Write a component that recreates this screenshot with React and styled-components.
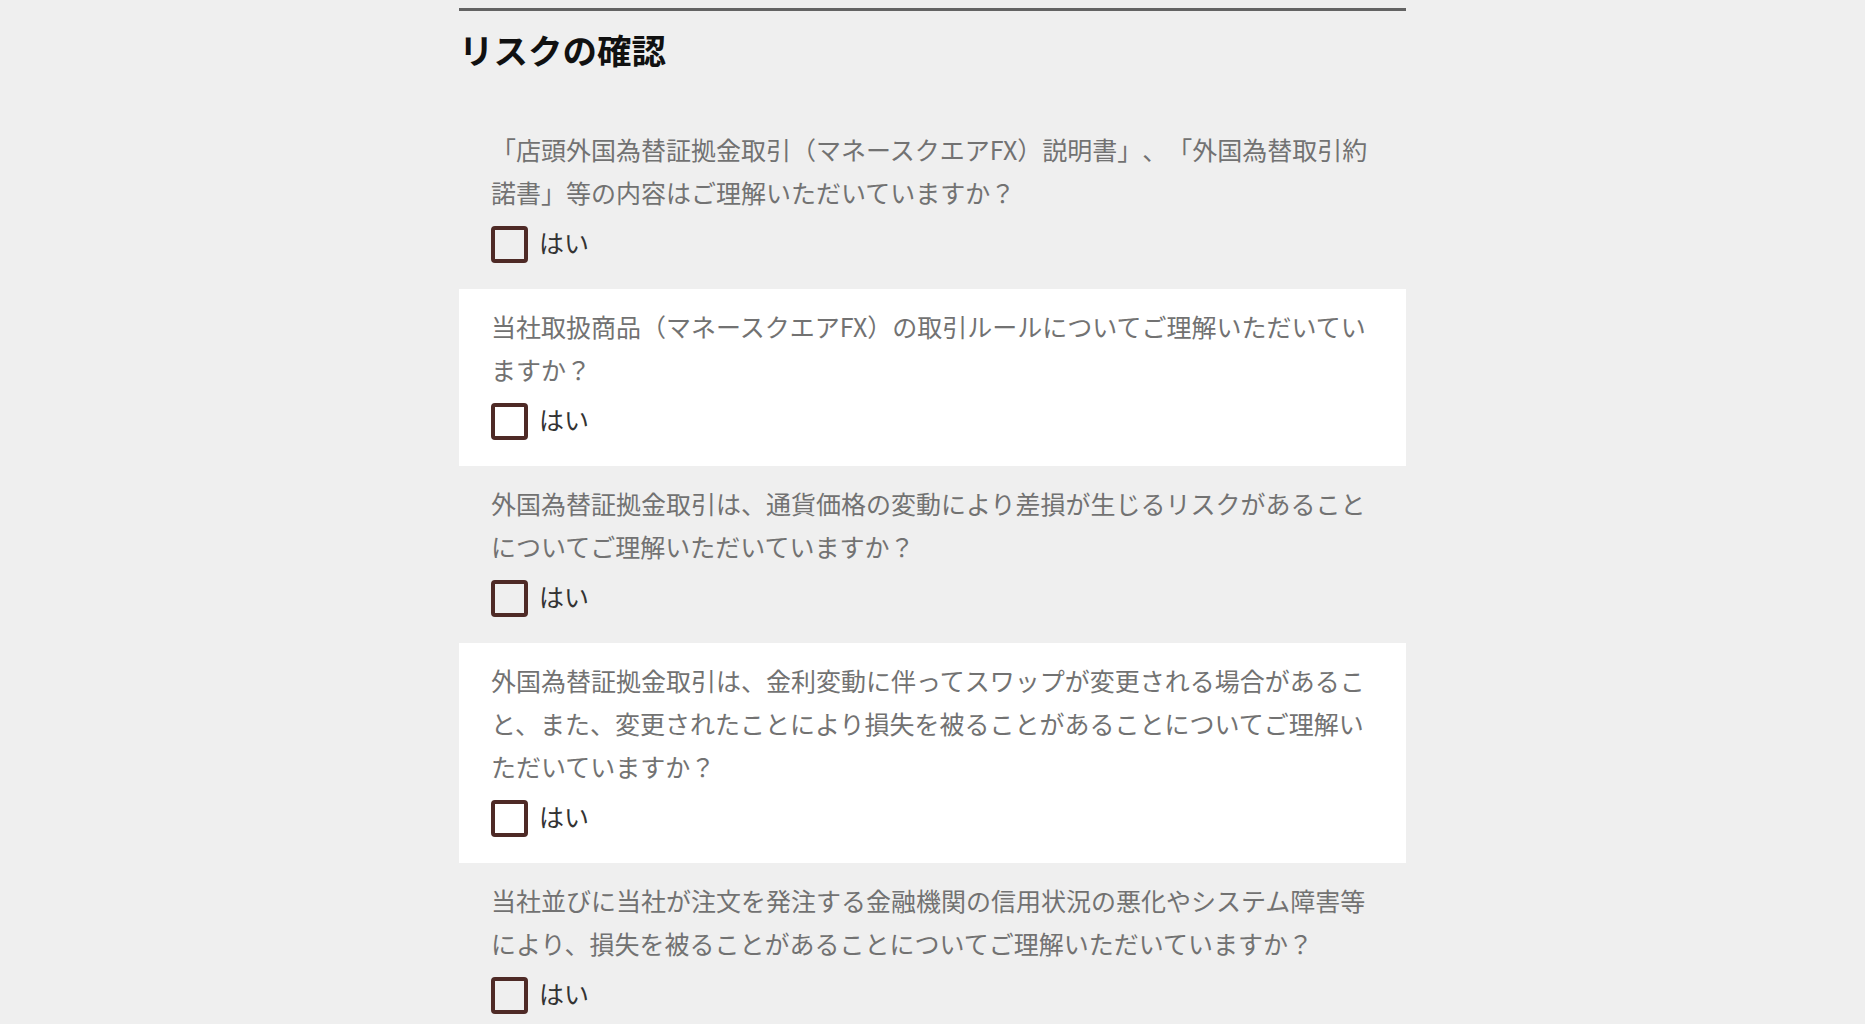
import { useState } from "react";
import styled, { createGlobalStyle } from 'styled-components'

const GlobalStyle = createGlobalStyle`
body {
  margin: 0;
  background-color: #efefef;
  font-family: "Noto Sans CJK JP", "Noto Sans", sans-serif;
}
`

const Section = styled.section`
width: 947px;
margin: 8px auto 0;
border-top: 3px solid #636363;
`

const Title = styled.h2`
margin: 0;
padding: 14px 0 38px;
font-size: 34.5px;
line-height: 49px;
font-weight: 700;
color: #111;
`

const Item = styled.div`
padding: 16px 32px 26px;
background-color: ${(props) => (props.$white ? '#ffffff' : 'transparent')};
`

const Question = styled.p`
margin: 0;
font-size: 25px;
line-height: 43px;
color: #727272;
text-spacing-trim: space-all;
`

const CheckRow = styled.label`
display: flex;
align-items: center;
gap: 11px;
height: 37px;
margin-top: 12px;
cursor: pointer;
`

const Box = styled.span`
box-sizing: border-box;
width: 37px;
height: 37px;
border: 4.5px solid #4e2a26;
border-radius: 4px;
display: flex;
align-items: center;
justify-content: center;
color: #4e2a26;
font-size: 24px;
font-weight: 700;
`

const HiddenInput = styled.input`
display: none;
`

const Yes = styled.span`
font-size: 25px;
color: #333;
line-height: 37px;
padding-bottom: 5px;
`

const questions = [
    '「店頭外国為替証拠金取引（マネースクエアFX）説明書」、「外国為替取引約諾書」等の内容はご理解いただいていますか？',
    '当社取扱商品（マネースクエアFX）の取引ルールについてご理解いただいていますか？',
    '外国為替証拠金取引は、通貨価格の変動により差損が生じるリスクがあることについてご理解いただいていますか？',
    '外国為替証拠金取引は、金利変動に伴ってスワップが変更される場合があること、また、変更されたことにより損失を被ることがあることについてご理解いただいていますか？',
    '当社並びに当社が注文を発注する金融機関の信用状況の悪化やシステム障害等により、損失を被ることがあることについてご理解いただいていますか？',
]

const App = () => {
    const [checked, setChecked] = useState(questions.map(() => false))

    const toggle = (i) => {
        setChecked(checked.map((c, j) => (j === i ? !c : c)))
    }

    return (
        <>
            <GlobalStyle />
            <Section>
                <Title>リスクの確認</Title>
                {questions.map((q, i) => (
                    <Item key={i} $white={i % 2 === 1}>
                        <Question>{q}</Question>
                        <CheckRow>
                            <HiddenInput type="checkbox" checked={checked[i]} onChange={() => toggle(i)} />
                            <Box>{checked[i] ? '✓' : ''}</Box>
                            <Yes>はい</Yes>
                        </CheckRow>
                    </Item>
                ))}
            </Section>
        </>
    )
}

export default App
